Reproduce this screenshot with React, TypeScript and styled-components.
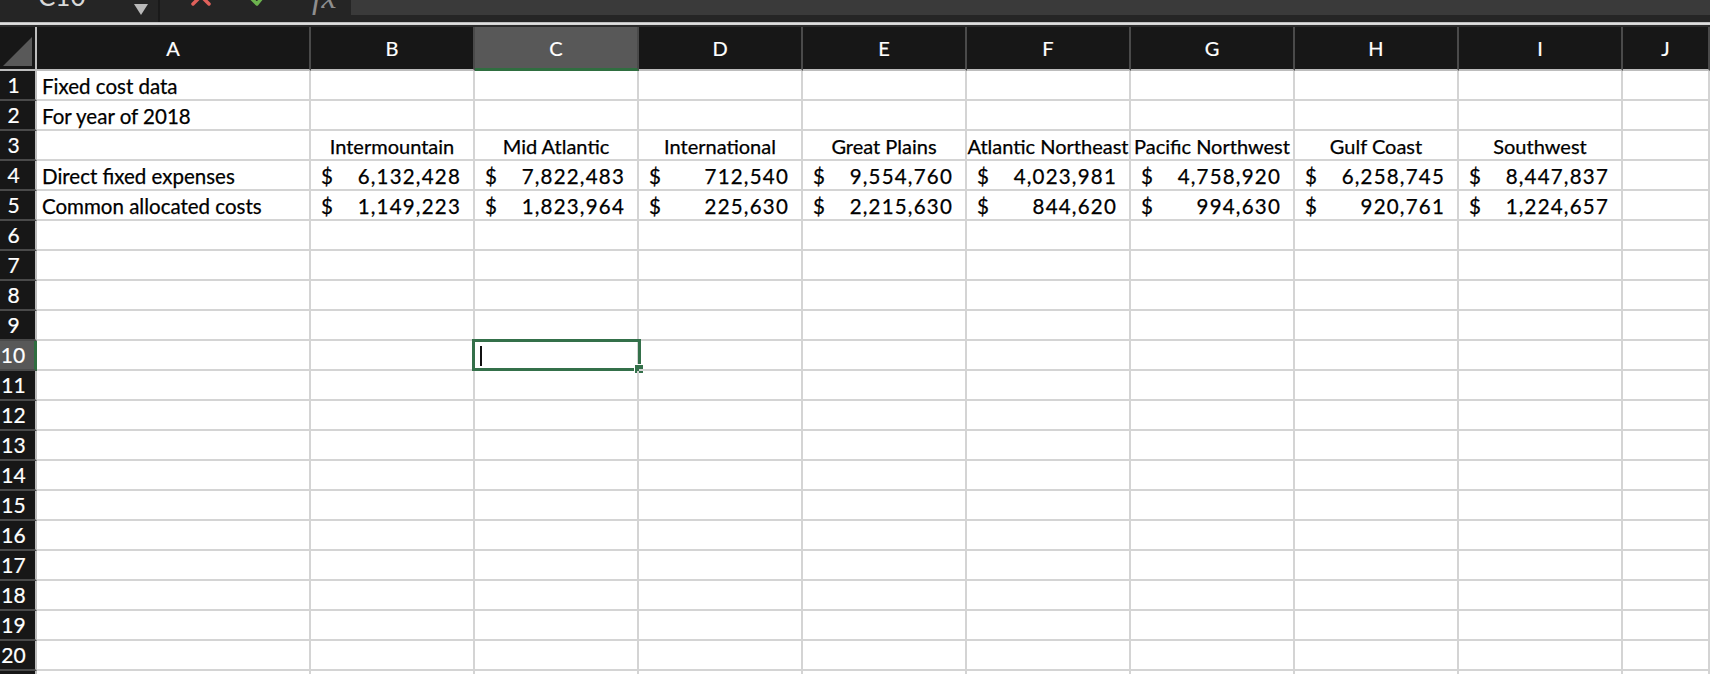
import React from "react";
import styled, { createGlobalStyle, css } from "styled-components";

const GlobalStyle = createGlobalStyle`
  html, body {
    margin: 0;
    padding: 0;
    background: #ffffff;
    overflow: hidden;
  }
  body {
    font-family: Lato, "Open Sans", sans-serif;
  }
`;

/*******************/
/*     Toolbar     */
/*******************/

const Toolbar = styled.div`
  height: 22px;
  background: #252525;
  display: flex;
  align-items: flex-start;
  overflow: hidden;
`;

const NameBox = styled.div`
  width: 160px;
  height: 22px;
  display: flex;
  align-items: flex-start;
  justify-content: space-between;
  border-right: 2px solid #1a1a1a;
  box-sizing: border-box;

  .name {
    margin: -17px 0 0 38px;
    font-size: 26px;
    line-height: 26px;
    color: #d8d8d8;
  }

  .caret {
    width: 0;
    height: 0;
    margin: 4px 10px 0 0;
    border-left: 7px solid transparent;
    border-right: 7px solid transparent;
    border-top: 11px solid #b9b9b9;
  }
`;

const IconSlot = styled.div<{ $left: number }>`
  margin-left: ${(p) => p.$left}px;
  margin-top: -15px;
  width: 22px;
  height: 22px;
`;

const Fx = styled.div`
  margin: -20px 0 0 42px;
  font-family: "Liberation Serif", serif;
  font-style: italic;
  font-size: 34px;
  line-height: 34px;
  color: #8e8e8e;
`;

const FormulaInput = styled.div`
  flex: 1;
  height: 15px;
  margin-left: 14px;
  background: #3a3a3a;
`;

const Divider = styled.div`
  height: 5px;
  background: linear-gradient(#9a9a9a 0, #e4e4e4 1px, #d2d2d2 3px, #2b2b2b 3px);
`;

/*******************/
/*      Sheet      */
/*******************/

const Sheet = styled.div`
  display: grid;
  grid-template-columns: 37px 274px repeat(8, 164px) 1fr;
  grid-template-rows: 44px;
  grid-auto-rows: 30px;
  font-size: 20.5px;
`;

const headerBase = css`
  background: #171717;
  color: #ffffff;
  box-sizing: border-box;
  -webkit-text-stroke: 0.2px #ffffff;
`;

const Corner = styled.div`
  ${headerBase};
  border-right: 2px solid #bdbdbd;
  border-bottom: 2px solid #bdbdbd;
  display: flex;
  align-items: flex-end;
  justify-content: flex-end;
  padding: 0 3px 3px 0;
`;

const ColHeader = styled.div<{ $active?: boolean }>`
  ${headerBase};
  display: flex;
  align-items: center;
  justify-content: center;
  font-size: 20px;
  border-right: 2px solid #4a4a4a;
  border-bottom: ${(p) => (p.$active ? "3px solid #2f6e40" : "2px solid #bdbdbd")};
  background: ${(p) => (p.$active ? "#585858" : "#171717")};
  padding-top: ${(p) => (p.$active ? "1px" : "0")};
`;

const RowHeader = styled.div<{ $active?: boolean }>`
  ${headerBase};
  display: flex;
  align-items: flex-end;
  justify-content: center;
  padding: 0 8px 2px 0;
  line-height: 24px;
  font-size: 21px;
  border-bottom: 2px solid #4a4a4a;
  border-right: ${(p) => (p.$active ? "3px solid #2f6e40" : "2px solid #bdbdbd")};
  background: ${(p) => (p.$active ? "#585858" : "#171717")};
`;

const Cell = styled.div<{ $align?: "left" | "center" }>`
  position: relative;
  box-sizing: border-box;
  border-right: 2px solid #d4d4d4;
  border-bottom: 2px solid #d4d4d4;
  display: flex;
  align-items: flex-end;
  justify-content: ${(p) => (p.$align === "center" ? "center" : "flex-start")};
  padding: 0 0 1px 5px;
  line-height: 24px;
  color: #000000;
  white-space: nowrap;
  -webkit-text-stroke: 0.25px #000000;
`;

const Centered = styled.span`
  margin-left: -5px;
  font-size: 20px;
`;

const Money = styled.div`
  flex: 1;
  display: flex;
  justify-content: space-between;
  padding: 0 12px 0 5px;
  letter-spacing: 1.2px;
`;

const Selection = styled.div`
  position: absolute;
  top: -2px;
  left: -3px;
  right: -4px;
  bottom: -2px;
  border: 3px solid #34704a;
  pointer-events: none;

  .cursor {
    position: absolute;
    left: 5px;
    top: 4px;
    bottom: 2px;
    width: 2px;
    background: #111111;
  }

  .handle {
    position: absolute;
    right: -6px;
    bottom: -6px;
    width: 8px;
    height: 8px;
    background: #34704a;
    border: 1px solid #ffffff;
  }
`;

const columns = ["A", "B", "C", "D", "E", "F", "G", "H", "I", "J"];

const regions = [
  "Intermountain",
  "Mid Atlantic",
  "International",
  "Great Plains",
  "Atlantic Northeast",
  "Pacific Northwest",
  "Gulf Coast",
  "Southwest",
];

const direct = ["6,132,428", "7,822,483", "712,540", "9,554,760", "4,023,981", "4,758,920", "6,258,745", "8,447,837"];
const common = ["1,149,223", "1,823,964", "225,630", "2,215,630", "844,620", "994,630", "920,761", "1,224,657"];

const labels: Record<number, string> = {
  1: "Fixed cost data",
  2: "For year of 2018",
  4: "Direct fixed expenses",
  5: "Common allocated costs",
};

const renderCell = (row: number, col: number) => {
  const key = `${row}-${col}`;
  const selected = row === 10 && col === 2;

  if (col === 0) {
    return <Cell key={key}>{labels[row] ?? ""}</Cell>;
  }

  const idx = col - 1;
  if (idx < 8) {
    if (row === 3) {
      return (
        <Cell key={key} $align="center">
          <Centered>{regions[idx]}</Centered>
        </Cell>
      );
    }
    if (row === 4 || row === 5) {
      const value = row === 4 ? direct[idx] : common[idx];
      return (
        <Cell key={key}>
          <Money>
            <span>$</span>
            <span>{value}</span>
          </Money>
        </Cell>
      );
    }
  }

  return (
    <Cell key={key}>
      {selected && (
        <Selection>
          <div className="cursor" />
          <div className="handle" />
        </Selection>
      )}
    </Cell>
  );
};

const App = () => {
  const rows = Array.from({ length: 21 }, (_, i) => i + 1);

  return (
    <>
      <GlobalStyle />

      {/* Formula bar */}
      <Toolbar>
        <NameBox>
          <span className="name">C10</span>
          <span className="caret" />
        </NameBox>
        <IconSlot $left={30}>
          <svg width="22" height="22" viewBox="0 0 22 22">
            <path d="M3 3 L19 19 M19 3 L3 19" stroke="#e0615b" strokeWidth="3.5" strokeLinecap="round" />
          </svg>
        </IconSlot>
        <IconSlot $left={36}>
          <svg width="22" height="22" viewBox="0 0 22 22">
            <path d="M2 12 L9 19 L21 4" stroke="#6cb24e" strokeWidth="3.5" fill="none" strokeLinecap="round" strokeLinejoin="round" />
          </svg>
        </IconSlot>
        <Fx>fx</Fx>
        <FormulaInput />
      </Toolbar>
      <Divider />

      {/* Grid */}
      <Sheet>
        <Corner>
          <svg width="29" height="29" viewBox="0 0 29 29">
            <polygon points="29,0 29,29 0,29" fill="#595959" />
          </svg>
        </Corner>
        {columns.map((c) => (
          <ColHeader key={c} $active={c === "C"}>
            {c}
          </ColHeader>
        ))}

        {rows.map((r) => (
          <React.Fragment key={r}>
            <RowHeader $active={r === 10}>{r}</RowHeader>
            {columns.map((_, ci) => renderCell(r, ci))}
          </React.Fragment>
        ))}
      </Sheet>
    </>
  );
};

export default App;
